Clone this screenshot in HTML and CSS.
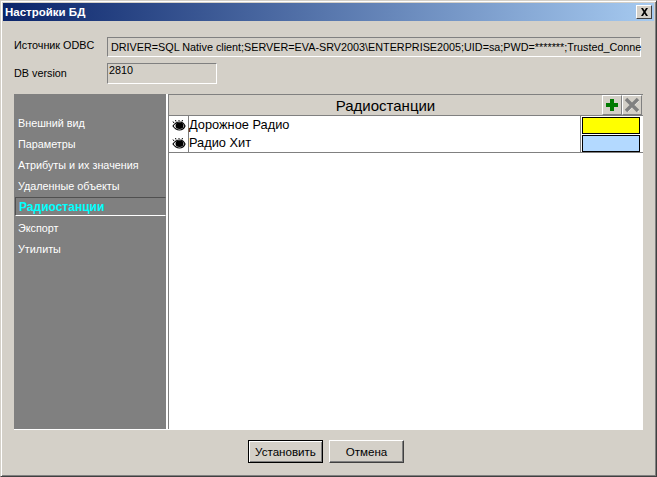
FILE: index.html
```html
<!DOCTYPE html>
<html lang="ru">
<head>
<meta charset="utf-8">
<title>Настройки БД</title>
<link rel="stylesheet" href="styles.css">
</head>
<body>
<div class="window">
  <div class="titlebar">
    <span class="title">Настройки БД</span>
    <button class="close" aria-label="close">
      <svg width="9" height="8" viewBox="0 0 9 8"><path d="M1 0h2l1.500 2.500L6 0h2L5.500 4 8 8H6L4.500 5.500 3 8H1l2.500-4z" fill="#000"/></svg>
    </button>
  </div>
  <div class="body">
    <div class="field-row odbc-row">
      <label class="field-label">Источник ODBC</label>
      <div class="field field-wide">DRIVER=SQL Native client;SERVER=EVA-SRV2003\ENTERPRISE2005;UID=sa;PWD=*******;Trusted_Conne</div>
    </div>
    <div class="field-row version-row">
      <label class="field-label">DB version</label>
      <div class="field field-short">2810</div>
    </div>
    <div class="main">
      <nav class="nav">
        <div class="nav-item">Внешний вид</div>
        <div class="nav-item">Параметры</div>
        <div class="nav-item">Атрибуты и их значения</div>
        <div class="nav-item">Удаленные объекты</div>
        <div class="nav-item active">Радиостанции</div>
        <div class="nav-item">Экспорт</div>
        <div class="nav-item">Утилиты</div>
      </nav>
      <section class="content">
        <header class="content-head">
          <span class="content-title">Радиостанции</span>
          <div class="tools">
            <button class="tool" aria-label="add">
              <svg width="14" height="14" viewBox="0 0 14 14"><path d="M5 1h4v4h4v4H9v4H5V9H1V5h4z" fill="#007a00"/></svg>
            </button>
            <button class="tool" aria-label="delete">
              <svg width="16" height="16" viewBox="0 0 16 16"><path d="M2.500 2.500l12 12M14.500 3.500l-11 11" stroke="#fff" stroke-width="1.500" fill="none"/><path d="M2 2l12 12M14 2L2 14" stroke="#808080" stroke-width="3.500" fill="none"/></svg>
            </button>
          </div>
        </header>
        <div class="table">
          <div class="row">
            <div class="cell-eye">
              <svg width="14" height="11" viewBox="0 0 14 11"><path d="M1 6C3 3 5 2 7.500 2S12 3.500 13 6c-1 2.500-3 4-5.500 4S3 9 1 6z" fill="#fff" stroke="#000" stroke-width="1.200"/><ellipse cx="7.500" cy="5.800" rx="4" ry="3.200" fill="#000"/><path d="M2 3L1 1.500M4 1.500L3.500 0M7 1V0M10 1.500L10.500 0" stroke="#000"/></svg>
            </div>
            <div class="cell-name">Дорожное Радио</div>
            <div class="cell-color"><div class="chip chip-yellow"></div></div>
          </div>
          <div class="row">
            <div class="cell-eye">
              <svg width="14" height="11" viewBox="0 0 14 11"><path d="M1 6C3 3 5 2 7.500 2S12 3.500 13 6c-1 2.500-3 4-5.500 4S3 9 1 6z" fill="#fff" stroke="#000" stroke-width="1.200"/><ellipse cx="7.500" cy="5.800" rx="4" ry="3.200" fill="#000"/><path d="M2 3L1 1.500M4 1.500L3.500 0M7 1V0M10 1.500L10.500 0" stroke="#000"/></svg>
            </div>
            <div class="cell-name">Радио Хит</div>
            <div class="cell-color"><div class="chip chip-blue"></div></div>
          </div>
        </div>
      </section>
    </div>
    <div class="actions">
      <button class="btn btn-default">Установить</button>
      <button class="btn">Отмена</button>
    </div>
  </div>
</div>
</body>
</html>
```

FILE: styles.css
```css
* { box-sizing: border-box; }
html, body { margin: 0; padding: 0; }
body {
  width: 657px;
  height: 477px;
  overflow: hidden;
  background: #d4d0c8;
  font-family: "Liberation Sans", Arial, sans-serif;
  font-size: 10.800px;
  line-height: 13px;
  color: #000;
}
button { font-family: inherit; padding: 0; margin: 0; }
.window {
  width: 657px;
  height: 477px;
  background: #d4d0c8;
  display: flex;
  flex-direction: column;
  border-top: 1px solid #d4d0c8;
  border-left: 1px solid #d4d0c8;
  border-right: 1px solid #404040;
  border-bottom: 1px solid #404040;
  box-shadow: inset 1px 1px 0 #fff, inset -1px -1px 0 #808080;
  padding: 2px 3px 3px 2px;
}
.titlebar {
  height: 18px;
  flex: none;
  background: linear-gradient(to right, #0a246a, #a6caf0);
  display: flex;
  align-items: center;
  justify-content: space-between;
  padding: 0 2px 0 2px;
  margin-right: -1px;
}
.title {
  color: #fff;
  font: bold 11.500px "Liberation Sans", Arial, sans-serif;
}
.close {
  width: 16px;
  height: 14px;
  background: #d4d0c8;
  border: 1px solid;
  border-color: #fff #404040 #404040 #fff;
  display: flex;
  align-items: center;
  justify-content: center;
}
.body {
  flex: 1;
  display: flex;
  flex-direction: column;
  padding: 16px 10px 0 11px;
  min-height: 0;
}
.field-row { display: flex; align-items: center; }
.field-label {
  width: 93px;
  flex: none;
}
.odbc-row .field-label { padding-bottom: 3px; }
.field {
  height: 20px;
  border: 1px solid;
  border-color: #808080 #fff #fff #808080;
  white-space: nowrap;
}
.field-wide { width: 534px; padding: 3px 0 0 3px; }
.field-short { width: 110px; height: 21px; padding: 0 0 0 1px; }
.version-row { margin-top: 6px; }
.main {
  margin-top: 10px;
  height: 336px;
  width: 629px;
  display: flex;
  border-bottom: 1px solid #fff;
}
.nav {
  width: 152px;
  flex: none;
  background: #808080;
  padding-top: 20px;
  color: #fff;
}
.nav-item {
  height: 21px;
  padding: 3px 0 0 4px;
  white-space: nowrap;
}
.nav-item.active {
  height: 19px;
  margin: -1px 0 3px 1px;
  padding: 3px 0 0 3px;
  width: 151px;
  color: #00ffff;
  font-size: 12px;
  font-weight: bold;
  border: 1px solid;
  border-color: #505050 #808080 #fff #505050;
}
.content {
  flex: 1;
  border-left: 2px solid #fff;
  background: #d4d0c8;
  display: flex;
  flex-direction: column;
  min-width: 0;
}
.content-head {
  height: 21px;
  flex: none;
  display: flex;
  align-items: center;
  border-top: 1px solid #808080;
  border-left: 1px solid #808080;
  padding-right: 1px;
}
.content-title {
  flex: 1;
  text-align: center;
  font-size: 15px;
  line-height: 17px;
}
.tools { display: flex; }
.tool {
  width: 20px;
  height: 20px;
  background: #d4d0c8;
  border: 1px solid;
  border-color: #fff #808080 #808080 #fff;
  display: flex;
  align-items: center;
  justify-content: center;
}
.table {
  flex: 1;
  background: #fff;
  border-left: 1px solid #808080;
  border-top: 1px solid #808080;
  min-height: 0;
}
.row {
  display: flex;
  height: 18px;
}
.row:last-child { height: 19px; border-bottom: 1px solid #808080; }
.cell-eye {
  width: 20px;
  flex: none;
  border-right: 1px solid #808080;
  display: flex;
  align-items: center;
  justify-content: center;
}
.cell-name {
  flex: 1;
  font-size: 12.800px;
  line-height: 17px;
  border-right: 1px solid #808080;
}
.cell-color {
  width: 62px;
  flex: none;
  padding: 1px 0 0 1px;
}
.chip {
  width: 58px;
  height: 17px;
  border: 1px solid #000;
}
.chip-yellow { background: #ffff00; }
.chip-blue { background: #b3d9ff; }
.actions {
  display: flex;
  justify-content: center;
  gap: 6px;
  margin-top: 10px;
  padding-right: 5px;
}
.btn {
  width: 75px;
  height: 23px;
  font-size: 11.600px;
  background: #d4d0c8;
  border: 1px solid;
  border-color: #fff #404040 #404040 #fff;
  box-shadow: inset -1px -1px 0 #808080;
}
.btn-default {
  border-color: #000;
  box-shadow: inset 1px 1px 0 #fff, inset -1px -1px 0 #808080;
}
```
